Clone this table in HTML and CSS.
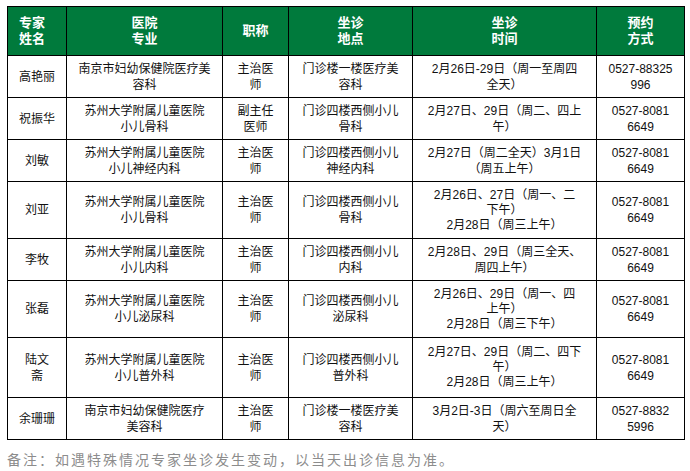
FILE: index.html
```html
<!DOCTYPE html>
<html lang="zh-CN">
<head>
<meta charset="utf-8">
<title>专家坐诊安排</title>
<link rel="stylesheet" href="styles.css">
</head>
<body>
<div class="page">
  <table class="schedule">
    <colgroup>
      <col class="c-name">
      <col class="c-hosp">
      <col class="c-title">
      <col class="c-place">
      <col class="c-time">
      <col class="c-book">
    </colgroup>
    <thead>
      <tr>
        <th class="th-first">专家<br>姓名</th>
        <th>医院<br>专业</th>
        <th>职称</th>
        <th>坐诊<br>地点</th>
        <th>坐诊<br>时间</th>
        <th>预约<br>方式</th>
      </tr>
    </thead>
    <tbody>
      <tr>
        <td>高艳丽</td>
        <td>南京市妇幼保健院医疗美<br>容科</td>
        <td>主治医<br>师</td>
        <td>门诊楼一楼医疗美<br>容科</td>
        <td>2月26日-29日（周一至周四<br>全天）</td>
        <td>0527-88325<br>996</td>
      </tr>
      <tr>
        <td>祝振华</td>
        <td>苏州大学附属儿童医院<br>小儿骨科</td>
        <td>副主任<br>医师</td>
        <td>门诊四楼西侧小儿<br>骨科</td>
        <td>2月27日、29日（周二、四上<br>午）</td>
        <td>0527-8081<br>6649</td>
      </tr>
      <tr>
        <td>刘敏</td>
        <td>苏州大学附属儿童医院<br>小儿神经内科</td>
        <td>主治医<br>师</td>
        <td>门诊四楼西侧小儿<br>神经内科</td>
        <td>2月27日（周二全天）3月1日<br>（周五上午）</td>
        <td>0527-8081<br>6649</td>
      </tr>
      <tr>
        <td>刘亚</td>
        <td>苏州大学附属儿童医院<br>小儿骨科</td>
        <td>主治医<br>师</td>
        <td>门诊四楼西侧小儿<br>骨科</td>
        <td class="tri">2月26日、27日（周一、二<br>下午）<br>2月28日（周三上午）</td>
        <td>0527-8081<br>6649</td>
      </tr>
      <tr>
        <td>李牧</td>
        <td>苏州大学附属儿童医院<br>小儿内科</td>
        <td>主治医<br>师</td>
        <td>门诊四楼西侧小儿<br>内科</td>
        <td>2月28日、29日（周三全天、<br>周四上午）</td>
        <td>0527-8081<br>6649</td>
      </tr>
      <tr>
        <td>张磊</td>
        <td>苏州大学附属儿童医院<br>小儿泌尿科</td>
        <td>主治医<br>师</td>
        <td>门诊四楼西侧小儿<br>泌尿科</td>
        <td class="tri">2月26日、29日（周一、四<br>上午）<br>2月28日（周三下午）</td>
        <td>0527-8081<br>6649</td>
      </tr>
      <tr class="row-tall">
        <td>陆文<br>斋</td>
        <td>苏州大学附属儿童医院<br>小儿普外科</td>
        <td>主治医<br>师</td>
        <td>门诊四楼西侧小儿<br>普外科</td>
        <td class="tri">2月27日、29日（周二、四下<br>午）<br>2月28日（周三上午）</td>
        <td>0527-8081<br>6649</td>
      </tr>
      <tr>
        <td>余珊珊</td>
        <td>南京市妇幼保健院医疗<br>美容科</td>
        <td>主治医<br>师</td>
        <td>门诊楼一楼医疗美<br>容科</td>
        <td>3月2日-3日（周六至周日全<br>天）</td>
        <td>0527-8832<br>5996</td>
      </tr>
    </tbody>
  </table>
  <p class="note">备注：如遇特殊情况专家坐诊发生变动，以当天出诊信息为准。</p>
</div>
</body>
</html>
```

FILE: styles.css
```css
html, body {
  margin: 0;
  padding: 0;
  background: #ffffff;
}

.page {
  padding: 6px 0 0 7px;
  font-family: "Liberation Sans", "Noto Sans CJK SC", sans-serif;
}

.schedule {
  border-collapse: collapse;
  table-layout: fixed;
  width: 677px;
}

.c-name { width: 59px; }
.c-hosp { width: 156px; }
.c-title { width: 66px; }
.c-place { width: 124px; }
.c-time { width: 184px; }
.c-book { width: 88px; }

.schedule th,
.schedule td {
  border: 1px solid #000;
  text-align: center;
  vertical-align: middle;
  white-space: nowrap;
  padding: 0;
}

.schedule th {
  background: #007a3c;
  color: #ffffff;
  font-weight: bold;
  font-size: 13px;
  line-height: 16px;
  height: 48px;
}

.schedule th.th-first {
  text-align: left;
  padding-left: 11px;
}

.schedule td {
  color: #111111;
  font-size: 12px;
  line-height: 16px;
  height: 41px;
}

.schedule td.tri {
  line-height: 15px;
}

.schedule tr:nth-child(4) td,
.schedule tr:nth-child(6) td {
  height: 56px;
}

.schedule tr.row-tall td {
  height: 59px;
}

.note {
  margin: 10px 0 0 0;
  color: #8c8c8c;
  font-size: 14px;
  line-height: 20px;
  letter-spacing: 2px;
}
```
